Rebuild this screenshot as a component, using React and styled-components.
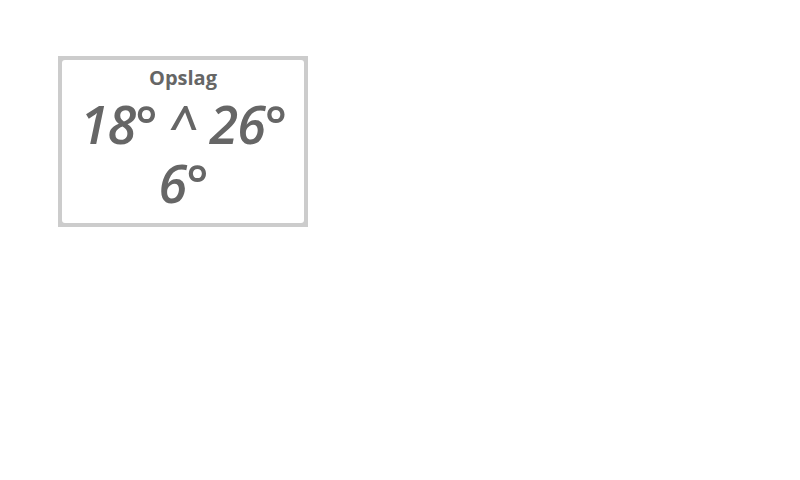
import styled, { createGlobalStyle } from "styled-components";

const Global = createGlobalStyle`
  body {
    margin: 0;
    background: #fff;
    font-family: "Open Sans", sans-serif;
  }
`;

const Page = styled.div`
  padding: 56px 0 0 58px;
`;

const Frame = styled.div`
  width: 250px;
  height: 171px;
  padding: 4px;
  box-sizing: border-box;
  background: #cccccc;
`;

const Card = styled.div`
  height: 100%;
  background: #fff;
  border-radius: 3px;
  display: flex;
  flex-direction: column;
  align-items: center;
  color: #666;
`;

const Title = styled.div`
  font-weight: 700;
  font-size: 20px;
  line-height: 27px;
  margin-top: 4px;
`;

const Temps = styled.div`
  font-style: italic;
  font-weight: 600;
  font-size: 52px;
  line-height: 59px;
  letter-spacing: -1px;
  text-align: center;
  margin-top: 3px;
`;

export default function App() {
  return (
    <Page>
      <Global />
      <Frame>
        <Card>
          <Title>Opslag</Title>
          <Temps>
            18° ^ 26°
            <br />
            6°
          </Temps>
        </Card>
      </Frame>
    </Page>
  );
}
